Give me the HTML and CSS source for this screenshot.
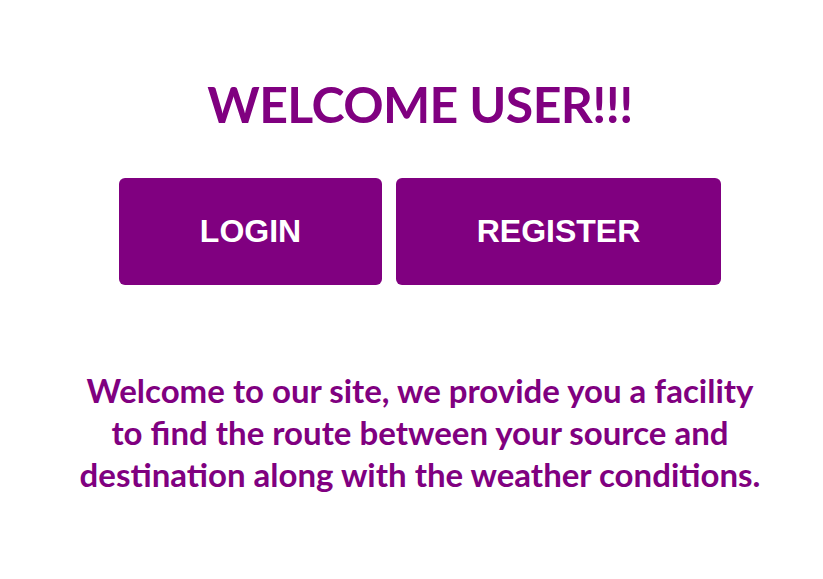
FILE: index.html
```html
<!DOCTYPE html>
<html>
<head>
<meta charset="utf-8">
<link rel="stylesheet" href="styles.css">
</head>
<body>
<main class="page">
  <h1 class="title">WELCOME USER!!!</h1>
  <div class="actions">
    <a class="btn btn-login" href="#">LOGIN</a>
    <a class="btn btn-register" href="#">REGISTER</a>
  </div>
  <p class="intro">Welcome to our site, we provide you a facility to find the route between your source and destination along with the weather conditions.</p>
</main>
</body>
</html>
```
FILE: styles.css
```css
html, body {
  margin: 0;
  padding: 0;
  background: #ffffff;
}
.page {
  display: flex;
  flex-direction: column;
  align-items: center;
  padding: 0 0 0 17px;
  color: #800080;
  font-family: "Lato", "Liberation Sans", sans-serif;
}
.title {
  margin: 74px 0 0 0;
  font-size: 50px;
  line-height: 60px;
  letter-spacing: -0.6px;
  font-weight: 700;
}
.actions {
  display: flex;
  gap: 14px;
  margin-top: 44px;
}
.btn {
  display: flex;
  align-items: center;
  justify-content: center;
  height: 107px;
  border-radius: 6px;
  background: #800080;
  color: #ffffff;
  text-decoration: none;
  font-family: "Liberation Sans", Arial, sans-serif;
  font-weight: 700;
  font-size: 32px;
}
.btn-login { width: 263px; }
.btn-register { width: 325px; }
.intro {
  margin: 84px 0 0 0;
  max-width: 690px;
  text-align: center;
  font-size: 33px;
  line-height: 42px;
  font-weight: 700;
}
```
